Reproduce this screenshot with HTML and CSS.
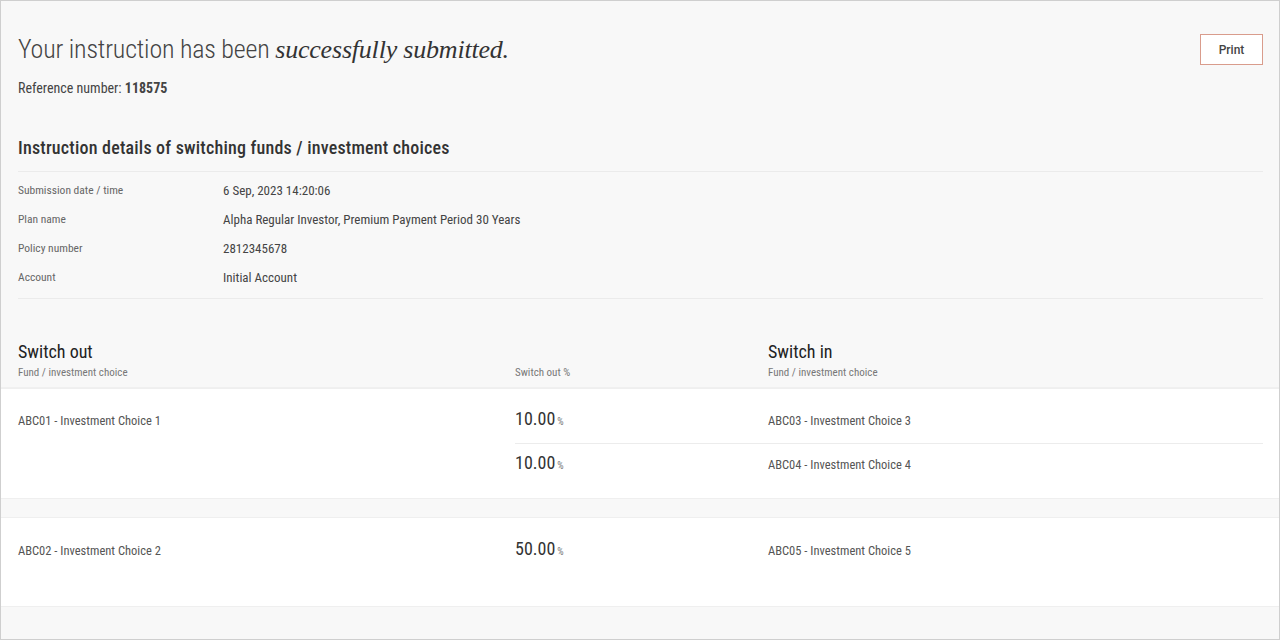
FILE: index.html
```html
<!DOCTYPE html>
<html lang="en">
<head>
  <meta charset="UTF-8" />
  <title>Instruction submitted</title>
  <link rel="stylesheet" href="styles.css">
</head>
<body>
  <div class="page">

    <div class="top">
      <div>
        <h1>Your instruction has been <em>successfully submitted.</em></h1>
        <p class="ref">Reference number: <strong>118575</strong></p>
      </div>
      <button class="print-btn">Print</button>
    </div>

    <div class="details">
      <h2>Instruction details of switching funds / investment choices</h2>
      <dl class="info">
        <dt>Submission date / time</dt>
        <dd>6 Sep, 2023 14:20:06</dd>
        <dt>Plan name</dt>
        <dd>Alpha Regular Investor, Premium Payment Period 30 Years</dd>
        <dt>Policy number</dt>
        <dd>2812345678</dd>
        <dt>Account</dt>
        <dd>Initial Account</dd>
      </dl>
    </div>

    <div class="switch-head">
      <div>
        <h3>Switch out</h3>
        <span class="col-label">Fund / investment choice</span>
      </div>
      <div>
        <span class="col-label">Switch out %</span>
      </div>
      <div>
        <h3>Switch in</h3>
        <span class="col-label">Fund / investment choice</span>
      </div>
    </div>

    <div class="switch-row">
      <div class="fund-out">ABC01 - Investment Choice 1</div>
      <div class="ins">
        <div class="in-line">
          <span class="pct">10.00<small>%</small></span>
          <span class="fund-in">ABC03 - Investment Choice 3</span>
        </div>
        <div class="in-line">
          <span class="pct">10.00<small>%</small></span>
          <span class="fund-in">ABC04 - Investment Choice 4</span>
        </div>
      </div>
    </div>

    <div class="switch-row tall">
      <div class="fund-out">ABC02 - Investment Choice 2</div>
      <div class="ins">
        <div class="in-line">
          <span class="pct">50.00<small>%</small></span>
          <span class="fund-in">ABC05 - Investment Choice 5</span>
        </div>
      </div>
    </div>

  </div>
</body>
</html>
```

FILE: styles.css
```css
body {
  margin: 0;
  background: #f8f8f8;
  font-family: "Roboto Condensed", Roboto, sans-serif;
  color: #333;
}
.page {
  height: 638px;
  border: 1px solid #cfcfcf;
  overflow: hidden;
}
.top {
  display: flex;
  justify-content: space-between;
  align-items: flex-start;
  padding: 33px 16px 0 17px;
}
h1 {
  margin: 0;
  font-size: 26px;
  font-weight: 300;
  color: #444;
  letter-spacing: -0.2px;
}
h1 em {
  font-family: "Liberation Serif", serif;
  font-size: 26px;
  color: #333;
}
.ref {
  margin: 15px 0 0;
  font-size: 14px;
  color: #444;
}
.ref strong {
  font-weight: 700;
}
.print-btn {
  margin-top: 0;
  width: 63px;
  height: 31px;
  background: #fff;
  border: 1px solid #d99c8c;
  font-family: Roboto, sans-serif;
  font-size: 12px;
  font-weight: 500;
  color: #444;
}
.details {
  padding: 0 16px 0 17px;
}
h2 {
  margin: 41px 0 0;
  padding-bottom: 13px;
  font-size: 18px;
  font-weight: 500;
  letter-spacing: 0.2px;
  color: #333;
  border-bottom: 1px solid #ebebeb;
}
.info {
  display: grid;
  grid-template-columns: 205px 1fr;
  row-gap: 13px;
  margin: 0;
  padding: 10px 0 13px;
  border-bottom: 1px solid #ebebeb;
}
.info dt {
  font-size: 11.5px;
  color: #666;
  line-height: 16px;
}
.info dd {
  margin: 0;
  font-size: 13px;
  color: #444;
  line-height: 14px;
  padding-top: 2px;
}
.switch-head {
  display: grid;
  grid-template-columns: 497px 253px 1fr;
  align-items: end;
  padding: 42px 16px 7px 17px;
  border-bottom: 1px solid #f0f0f0;
}
h3 {
  margin: 0 0 -1px;
  font-size: 18px;
  font-weight: 400;
  color: #222;
}
.col-label {
  font-size: 11px;
  color: #777;
}
.switch-row {
  display: grid;
  grid-template-columns: 497px 1fr;
  background: #fff;
  padding: 0 16px 0 17px;
  margin-bottom: 18px;
  border-top: 1px solid #efefef;
  border-bottom: 1px solid #efefef;
}
.switch-row.tall {
  height: 88px;
}
.fund-out {
  font-size: 12.5px;
  color: #555;
  padding-top: 24px;
}
.tall .fund-out {
  padding-top: 25px;
}
.in-line {
  display: grid;
  grid-template-columns: 253px 1fr;
  align-items: baseline;
  height: 54px;
  padding-top: 19px;
  box-sizing: border-box;
}
.in-line + .in-line {
  border-top: 1px solid #ececec;
  height: 55px;
  padding-top: 8px;
}
.tall .in-line {
  padding-top: 20px;
}
.pct {
  font-size: 18px;
  color: #333;
}
.pct small {
  font-size: 10px;
  color: #777;
  margin-left: 2px;
}
.fund-in {
  font-size: 12.5px;
  color: #555;
}
```
